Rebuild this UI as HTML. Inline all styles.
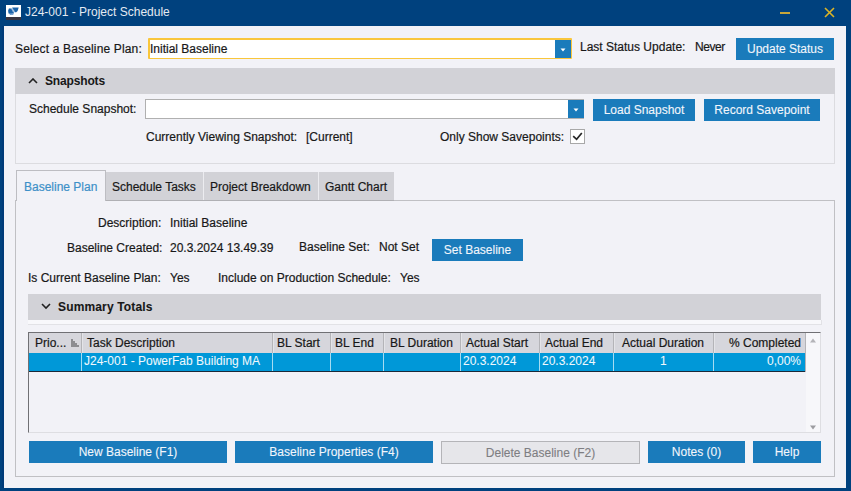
<!DOCTYPE html>
<html><head><meta charset="utf-8">
<style>
*{box-sizing:border-box;margin:0;padding:0}
html,body{width:851px;height:491px;overflow:hidden;background:#00417e;font-family:"Liberation Sans",sans-serif;font-size:12px;color:#181818}
.t{-webkit-text-stroke:0.2px currentColor}
.btn{-webkit-text-stroke:0.1px currentColor}
.a{position:absolute}
.t{position:absolute;white-space:pre;line-height:14px;font-size:12px}
.btn{position:absolute;background:#1a7bbb;color:#f2f6fb;text-align:center;white-space:pre;font-size:12px}
.hdr{position:absolute;background:#d2d2d7}
.sep{position:absolute;top:1px;width:1px;height:20px;background:#b4b4b8;box-shadow:1px 0 0 #e4e4e8}
.rsep{position:absolute;top:21px;width:1px;height:18px;background:#a6dcf2}
</style></head><body>
<!-- title bar -->
<div class="a" style="left:6px;top:5px;width:15px;height:12px;background:#fff"></div>
<div class="a" style="left:6px;top:17px;width:15px;height:3px;background:#38343f"></div>
<svg class="a" style="left:0;top:0" width="24" height="22" viewBox="0 0 24 22"><path d="M12.1 7.5 L18.7 7.5 L17.6 11.1 L16.2 12.2 L14.6 12.2 L14.2 10.5 L12.8 9.1 Z" fill="#1c64aa"/><path d="M8.9 8.5 L11.5 8.3 L13.4 9.9 L13.8 12.4 L13 15 L10.9 15 L8.5 13.2 L8.1 10.7 Z" fill="#1c64aa"/><path d="M8.5 13.2 L10.9 15 L13 15 L13.6 13 L11 13.4 Z" fill="#7aa6d4"/><path d="M10.5 8.2 L12.6 9.6 L13.2 11.8" stroke="#e6eef8" stroke-width="0.8" fill="none"/></svg>
<div class="t" style="left:25px;top:5px;color:#e4eaf2;font-size:12px;-webkit-text-stroke:0">J24-001 - Project Schedule</div>
<div class="a" style="left:780px;top:12px;width:10px;height:2px;background:#c6a53a"></div>
<svg class="a" style="left:824px;top:7px" width="11" height="11" viewBox="0 0 11 11"><path d="M1 1 L10 10 M10 1 L1 10" stroke="#dcb426" stroke-width="1.6"/></svg>

<!-- content panel -->
<div class="a" style="left:2px;top:26px;width:2px;height:462px;background:#003a78"></div>
<div class="a" style="left:4px;top:26px;width:842px;height:462px;background:#f2f2f7"></div>

<div class="t" style="left:15px;top:42px;letter-spacing:0.15px">Select a Baseline Plan:</div>
<div class="a" style="left:148px;top:38px;width:424px;height:21px;background:#fff;border:solid #f9c63c;border-width:2px 1px 1px 2px;border-radius:1px"></div>
<div class="a" style="left:555px;top:40px;width:16px;height:18px;background:#1a7bbb"></div>
<svg class="a" style="left:560px;top:48px" width="6" height="4"><path d="M0.5 0.5 L5.5 0.5 L3 3.5 Z" fill="#fff"/></svg>
<div class="t" style="left:150px;top:42px">Initial Baseline</div>
<div class="t" style="left:580px;top:40px">Last Status Update:</div>
<div class="t" style="left:695px;top:40px;letter-spacing:-0.45px">Never</div>
<div class="btn" style="left:736px;top:38px;width:98px;height:22px;line-height:23px">Update Status</div>

<!-- snapshots section -->
<div class="a" style="left:15px;top:68px;width:820px;height:96px;border:1px solid #dcdce0;border-top:none"></div>
<div class="hdr" style="left:15px;top:68px;width:820px;height:26px"></div>
<svg class="a" style="left:28px;top:78px" width="10" height="6"><path d="M1 5 L5 1 L9 5" stroke="#222" stroke-width="1.6" fill="none"/></svg>
<div class="t" style="left:45px;top:74px;font-weight:bold;-webkit-text-stroke:0;letter-spacing:-0.15px">Snapshots</div>
<div class="t" style="left:29px;top:102px">Schedule Snapshot:</div>
<div class="a" style="left:145px;top:99px;width:439px;height:20px;background:#fff;border:1px solid #b0b0b0"></div>
<div class="a" style="left:568px;top:100px;width:16px;height:18px;background:#1a7bbb"></div>
<svg class="a" style="left:573px;top:108px" width="6" height="4"><path d="M0.5 0.5 L5.5 0.5 L3 3.5 Z" fill="#fff"/></svg>
<div class="btn" style="left:593px;top:99px;width:102px;height:22px;line-height:23px">Load Snapshot</div>
<div class="btn" style="left:704px;top:99px;width:116px;height:22px;line-height:23px">Record Savepoint</div>
<div class="t" style="left:146px;top:130px">Currently Viewing Snapshot:</div>
<div class="t" style="left:306px;top:130px">[Current]</div>
<div class="t" style="left:440px;top:130px">Only Show Savepoints:</div>
<div class="a" style="left:570px;top:129px;width:15px;height:15px;background:#fff;border:1px solid #a8a8a8"></div>
<svg class="a" style="left:570px;top:129px" width="15" height="15"><path d="M3.2 7.2 L6.6 10.3 L11.8 4" stroke="#262626" stroke-width="1.7" fill="none"/></svg>

<!-- tabs -->
<div class="a" style="left:15px;top:200px;width:820px;height:277px;border:1px solid #c0c0c4"></div>
<div class="a" style="left:105px;top:172px;width:289px;height:29px;background:#d2d2d7;border-bottom:1px solid #b0b0b4"></div>
<div class="a" style="left:203px;top:172px;width:1px;height:28px;background:#ececf0"></div>
<div class="a" style="left:318px;top:172px;width:1px;height:28px;background:#ececf0"></div>
<div class="a" style="left:16px;top:170px;width:90px;height:31px;background:#f2f2f7;border:1px solid #bdbdc2;border-bottom:none"></div>
<div class="t" style="left:24px;top:180px;color:#3d90c8">Baseline Plan</div>
<div class="t" style="left:112px;top:180px">Schedule Tasks</div>
<div class="t" style="left:210px;top:180px">Project Breakdown</div>
<div class="t" style="left:325px;top:180px">Gantt Chart</div>

<!-- baseline info -->
<div class="t" style="left:98px;top:216px">Description:</div>
<div class="t" style="left:170px;top:216px">Initial Baseline</div>
<div class="t" style="left:67px;top:241px">Baseline Created:</div>
<div class="t" style="left:170px;top:241px">20.3.2024 13.49.39</div>
<div class="t" style="left:299px;top:240px">Baseline Set:</div>
<div class="t" style="left:379px;top:240px">Not Set</div>
<div class="btn" style="left:432px;top:239px;width:91px;height:22px;line-height:23px">Set Baseline</div>
<div class="t" style="left:28px;top:271px">Is Current Baseline Plan:</div>
<div class="t" style="left:170px;top:271px">Yes</div>
<div class="t" style="left:218px;top:271px">Include on Production Schedule:</div>
<div class="t" style="left:400px;top:271px">Yes</div>

<!-- summary totals -->
<div class="hdr" style="left:28px;top:294px;width:793px;height:26px"></div>
<div class="a" style="left:28px;top:320px;width:794px;height:5px;background:#f8f8fb;border:solid #e2e2e6;border-width:0 1px 1px 0"></div>
<svg class="a" style="left:41px;top:303px" width="10" height="7"><path d="M1 1 L5 5 L9 1" stroke="#222" stroke-width="1.6" fill="none"/></svg>
<div class="t" style="left:58px;top:300px;font-weight:bold;-webkit-text-stroke:0.1px currentColor;letter-spacing:0.15px">Summary Totals</div>

<!-- grid -->
<div class="a" style="left:28px;top:332px;width:793px;height:101px;background:#f2f2f7;border:1px solid #dedee2;border-top:1px solid #707074;border-left:1px solid #707074"></div>
<div class="a" style="left:29px;top:333px;width:776px;height:20px;background:#d6d6dc"></div><div class="a" style="left:805px;top:333px;width:1px;height:39px;background:#b4b4b8"></div><div class="a" style="left:806px;top:333px;width:14px;height:99px;background:#f7f7fa"></div>
<div class="a" style="left:29px;top:353px;width:776px;height:18px;background:#0098d8"></div>
<div class="a" style="left:29px;top:371px;width:776px;height:1px;background:#1b2a3a"></div>
<div class="a" style="left:29px;top:332px;width:777px;height:40px">
  <div class="sep" style="left:52px"></div><div class="sep" style="left:243px"></div><div class="sep" style="left:301px"></div><div class="sep" style="left:354px"></div><div class="sep" style="left:431px"></div><div class="sep" style="left:510px"></div><div class="sep" style="left:584px"></div><div class="sep" style="left:684px"></div>
  <div class="rsep" style="left:52px"></div><div class="rsep" style="left:243px"></div><div class="rsep" style="left:301px"></div><div class="rsep" style="left:354px"></div><div class="rsep" style="left:431px"></div><div class="rsep" style="left:510px"></div><div class="rsep" style="left:584px"></div><div class="rsep" style="left:684px"></div>
</div>
<div class="t" style="left:35px;top:336px">Prio...</div>
<svg class="a" style="left:71px;top:339px" width="8" height="8"><path d="M0 0 H2 V2 H4 V4 H6 V6 H8 V8 H0 Z" fill="#8c8c90"/></svg>
<div class="t" style="left:87px;top:336px">Task Description</div>
<div class="t" style="left:277px;top:336px">BL Start</div>
<div class="t" style="left:335px;top:336px">BL End</div>
<div class="t" style="left:390px;top:336px">BL Duration</div>
<div class="t" style="left:466px;top:336px">Actual Start</div>
<div class="t" style="left:545px;top:336px">Actual End</div>
<div class="t" style="left:622px;top:336px">Actual Duration</div>
<div class="t" style="left:729px;top:336px">% Completed</div>
<div class="t" style="left:84px;top:354px;color:#f0f8fd;-webkit-text-stroke:0.05px #f0f8fd">J24-001 - PowerFab Building MA</div>
<div class="t" style="left:463px;top:354px;color:#f0f8fd;-webkit-text-stroke:0.05px #f0f8fd">20.3.2024</div>
<div class="t" style="left:542px;top:354px;color:#f0f8fd;-webkit-text-stroke:0.05px #f0f8fd">20.3.2024</div>
<div class="t" style="left:660px;top:354px;color:#f0f8fd;-webkit-text-stroke:0.05px #f0f8fd">1</div>
<div class="t" style="left:767px;top:354px;color:#f0f8fd;-webkit-text-stroke:0.05px #f0f8fd">0,00%</div>
<svg class="a" style="left:810px;top:338px" width="6" height="5"><path d="M0 4.5 L3 0.5 L6 4.5 Z" fill="#b4b4b8"/></svg>
<svg class="a" style="left:810px;top:425px" width="6" height="5"><path d="M0 0.5 L6 0.5 L3 4.5 Z" fill="#9c9ca0"/></svg>

<!-- footer buttons -->
<div class="btn" style="left:29px;top:441px;width:198px;height:22px;line-height:23px">New Baseline (F1)</div>
<div class="btn" style="left:235px;top:441px;width:198px;height:22px;line-height:23px">Baseline Properties (F4)</div>
<div class="btn" style="left:441px;top:441px;width:199px;height:23px;line-height:22px;background:#e6e6ea;border:1px solid #b4b4b8;color:#7e7e82">Delete Baseline (F2)</div>
<div class="btn" style="left:648px;top:441px;width:97px;height:22px;line-height:23px">Notes (0)</div>
<div class="btn" style="left:753px;top:441px;width:68px;height:22px;line-height:23px">Help</div>
</body></html>
